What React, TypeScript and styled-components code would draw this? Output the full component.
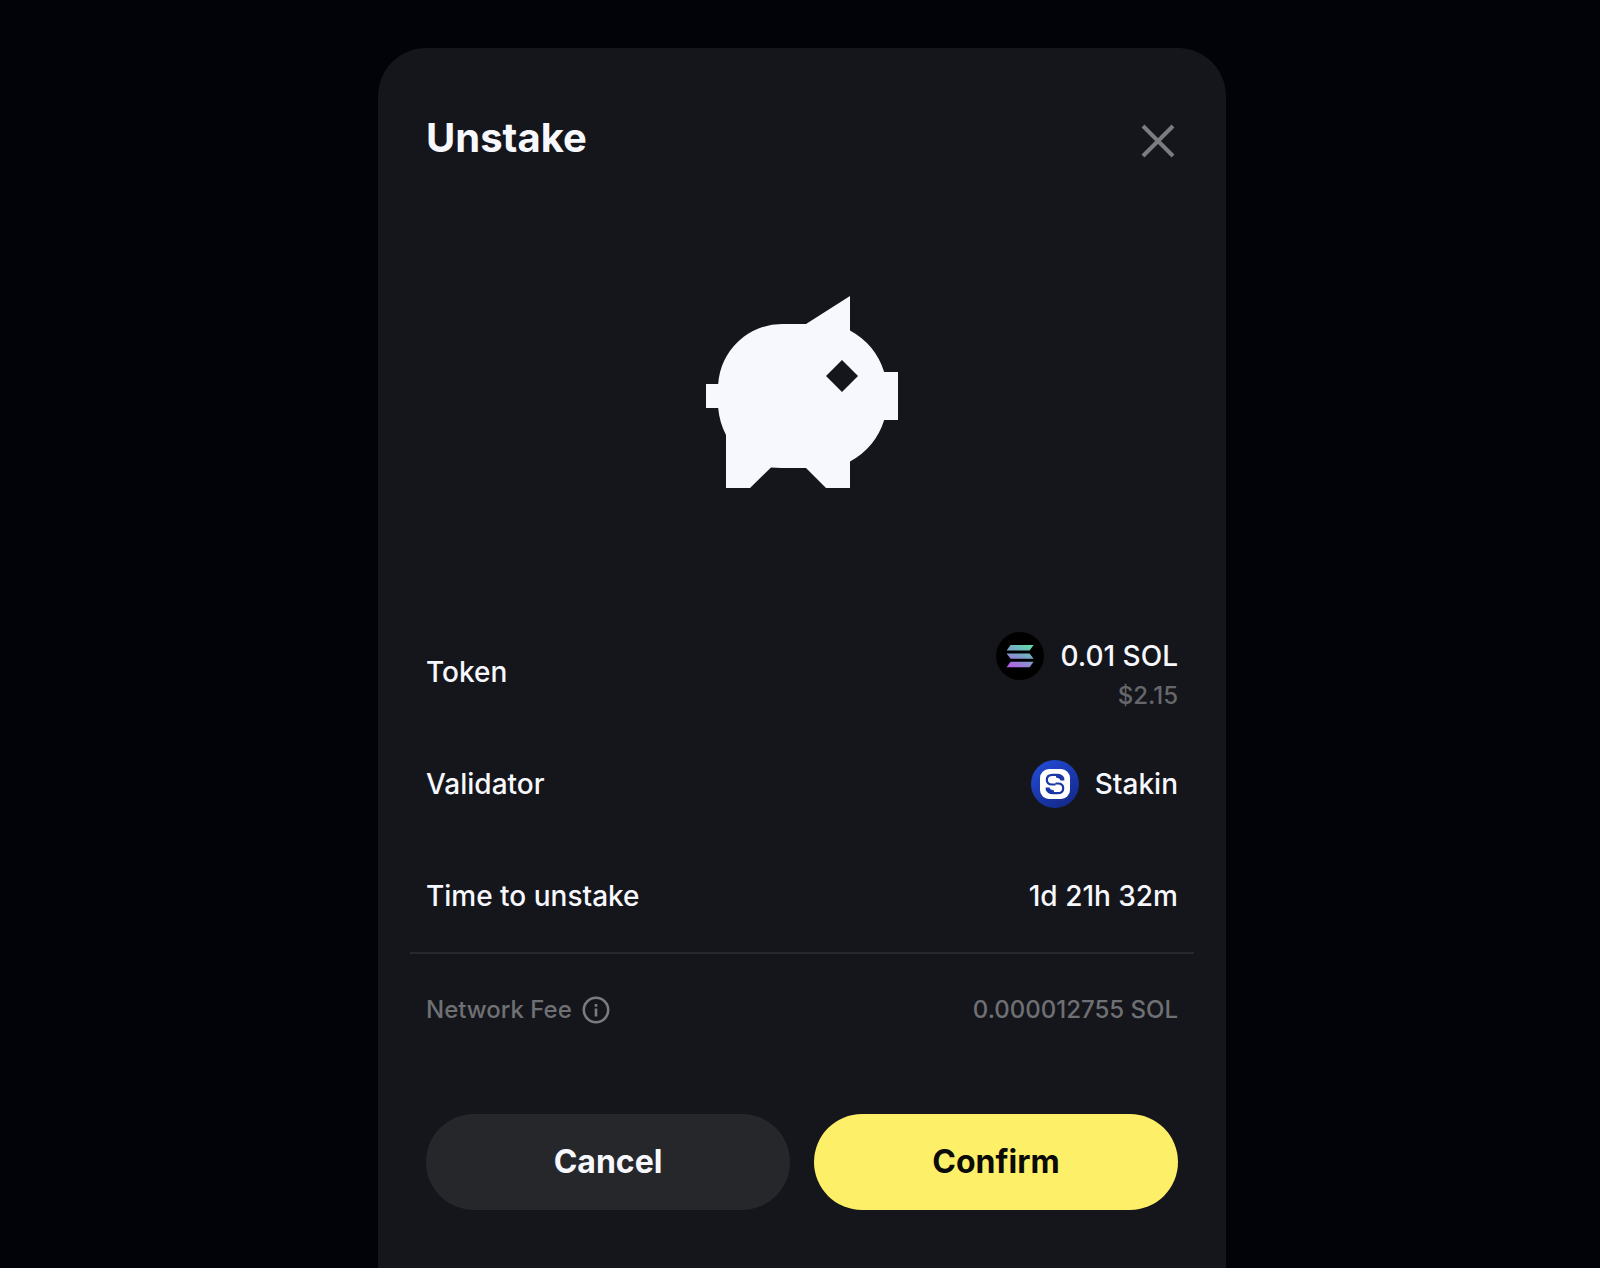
import React from "react";
import styled, { createGlobalStyle } from "styled-components";

const GlobalStyle = createGlobalStyle`
  *, *::before, *::after { box-sizing: border-box; }
  html, body { margin: 0; background: #020308; }
  body { font-family: Inter, "Liberation Sans", sans-serif; color: #f7f8fd; }
`;

const Backdrop = styled.main`
  min-height: 100vh;
  display: flex;
  justify-content: center;
  padding: 48px 0 0 4px;
  background: #020308;
`;

const Dialog = styled.section`
  width: 100%;
  max-width: 848px;
  display: flex;
  flex-direction: column;
  padding: 64px 48px 58px;
  border-radius: 48px 48px 0 0;
  background: #15161b;
`;

const Header = styled.header`
  display: flex;
  align-items: flex-start;
  justify-content: space-between;
  height: 56px;
`;

const Title = styled.h1`
  margin: 0;
  font-size: 40px;
  line-height: 52px;
  font-weight: 700;
`;

const CloseButton = styled.button`
  display: flex;
  padding: 12px 3px;
  border: 0;
  background: none;
  color: #7b7c80;
  cursor: pointer;
`;

const Illustration = styled.div`
  display: flex;
  justify-content: center;
  padding: 128px 0;
`;

const Details = styled.dl`
  display: flex;
  flex-direction: column;
  margin: 0;
`;

const Row = styled.div<{ $muted?: boolean }>`
  display: flex;
  align-items: center;
  justify-content: space-between;
  min-height: 112px;
  font-size: ${(p) => (p.$muted ? "24px" : "28px")};
  line-height: ${(p) => (p.$muted ? "32px" : "40px")};
  font-weight: 500;
  color: ${(p) => (p.$muted ? "#6f7074" : "#f7f8fd")};
`;

const Label = styled.dt`
  display: flex;
  align-items: center;
  gap: 10px;
`;

const Value = styled.dd`
  display: flex;
  flex-direction: column;
  align-items: flex-end;
  margin: 0;
`;

const Asset = styled.span`
  display: flex;
  align-items: center;
  gap: 16px;
`;

const Fiat = styled.span`
  font-size: 24px;
  line-height: 32px;
  color: #66676b;
`;

const Divider = styled.hr`
  height: 2px;
  margin: 0 -16px;
  border: 0;
  background: #27282c;
`;

const InfoButton = styled.button`
  display: flex;
  padding: 0;
  border: 0;
  background: none;
  color: #7b7c80;
`;

const Actions = styled.footer`
  display: grid;
  grid-template-columns: 1fr 1fr;
  gap: 24px;
  margin-top: 48px;
`;

const ActionButton = styled.button<{ $primary?: boolean }>`
  height: 96px;
  border: 0;
  border-radius: 48px;
  background: ${(p) => (p.$primary ? "#fdf068" : "#26272b")};
  color: ${(p) => (p.$primary ? "#0b0b08" : "#f7f8fd")};
  font-family: inherit;
  font-size: 32px;
  line-height: 40px;
  font-weight: 700;
  cursor: pointer;
`;

const CloseIcon = () => (
  <svg width="34" height="34" viewBox="0 0 34 34" fill="none" stroke="currentColor" strokeWidth="4" aria-hidden="true">
    <path d="M2 2 32 32M32 2 2 32" />
  </svg>
);

const PiggyBank = () => (
  <svg width="192" height="192" viewBox="0 0 192 192" fill="#f7f8fd" role="img" aria-label="Piggy bank">
    <path
      fillRule="evenodd"
      d="M100 28 144 0V34.5A72 72 0 0 1 178.2 76H192V124H178.2A72 72 0 0 1 144 165.5V192H120L100 172H76L65 171.4 44 192H20V139A72 72 0 0 1 12.2 112H0V88H12.2A64 64 0 0 1 76 28ZM136 64 120 80 136 96 152 80Z"
    />
  </svg>
);

const SolanaLogo = () => (
  <svg width="48" height="48" viewBox="0 0 48 48" aria-hidden="true">
    <defs>
      <linearGradient id="sol" x1="17" y1="36" x2="29" y2="11" gradientUnits="userSpaceOnUse">
        <stop stopColor="#b561e2" />
        <stop offset=".5" stopColor="#7c9fc9" />
        <stop offset="1" stopColor="#62dcac" />
      </linearGradient>
    </defs>
    <circle cx="24" cy="24" r="24" fill="#000" />
    <path
      fill="url(#sol)"
      d="M14.6 13H37.6L33.6 18.4H10.6ZM10.6 21.4H33.6L37.6 26.8H14.6ZM14.6 29.8H37.6L33.6 35.2H10.6Z"
    />
  </svg>
);

const StakinLogo = () => (
  <svg width="48" height="48" viewBox="0 0 48 48" fill="none" aria-hidden="true">
    <defs>
      <linearGradient id="stakin" x1="10" y1="4" x2="36" y2="46" gradientUnits="userSpaceOnUse">
        <stop stopColor="#2148cf" />
        <stop offset="1" stopColor="#142a8c" />
      </linearGradient>
    </defs>
    <circle cx="24" cy="24" r="24" fill="url(#stakin)" />
    <rect x="9" y="9" width="30" height="30" rx="9" fill="#fff" />
    <path
      stroke="#1b37a5"
      strokeWidth="2.2"
      d="M32.500 19C31.500 16 29 14.800 26 14.800H21.500C17.800 14.800 15.800 17 15.800 19.800C15.800 22.800 18 24.500 21 24.500H24.500M15.500 29C16.500 32 19 33.200 22 33.200H26.500C30.200 33.200 32.200 31 32.200 28.200C32.200 25.200 30 23.500 27 23.500H24.500"
    />
    <path
      fill="#1b37a5"
      d="M25 14.500C29.500 14.500 33 16.500 33.500 20.500H29.500C29 18.500 27.500 18 25 17.500ZM23 33.500C18.500 33.500 15 31.500 14.500 27.500H18.500C19 29.500 20.500 30 23 30.500Z"
    />
  </svg>
);

const InfoIcon = () => (
  <svg width="28" height="28" viewBox="0 0 28 28" fill="none" stroke="currentColor" strokeWidth="2.600" aria-hidden="true">
    <circle cx="14" cy="14" r="12.200" />
    <path d="M14 12.500V20.500M14 8V10.800" />
  </svg>
);

export default function App() {
  return (
    <>
      <GlobalStyle />
      <Backdrop>
        <Dialog role="dialog" aria-modal="true" aria-labelledby="dialog-title">
          <Header>
            <Title id="dialog-title">Unstake</Title>
            <CloseButton type="button" aria-label="Close">
              <CloseIcon />
            </CloseButton>
          </Header>
          <Illustration>
            <PiggyBank />
          </Illustration>
          <Details>
            <Row>
              <Label>Token</Label>
              <Value>
                <Asset>
                  <SolanaLogo />
                  0.01 SOL
                </Asset>
                <Fiat>$2.15</Fiat>
              </Value>
            </Row>
            <Row>
              <Label>Validator</Label>
              <Value>
                <Asset>
                  <StakinLogo />
                  Stakin
                </Asset>
              </Value>
            </Row>
            <Row>
              <Label>Time to unstake</Label>
              <Value>1d 21h 32m</Value>
            </Row>
          </Details>
          <Divider />
          <Details>
            <Row $muted>
              <Label>
                Network Fee
                <InfoButton type="button" aria-label="About the network fee">
                  <InfoIcon />
                </InfoButton>
              </Label>
              <Value>0.000012755 SOL</Value>
            </Row>
          </Details>
          <Actions>
            <ActionButton type="button">Cancel</ActionButton>
            <ActionButton type="button" $primary>
              Confirm
            </ActionButton>
          </Actions>
        </Dialog>
      </Backdrop>
    </>
  );
}
